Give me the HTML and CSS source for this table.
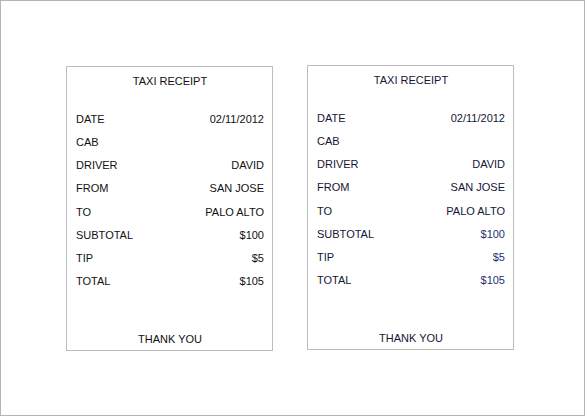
FILE: index.html
```html
<!DOCTYPE html>
<html>
<head>
  <title>Taxi Receipt</title>
  <link rel="stylesheet" href="styles.css">
</head>
<body>
  <div class="page">
    <div class="receipt receipt-left">
      <div class="title">TAXI RECEIPT</div>
      <div class="rows">
        <div class="row"><span>DATE</span><span>02/11/2012</span></div>
        <div class="row"><span>CAB</span><span></span></div>
        <div class="row"><span>DRIVER</span><span>DAVID</span></div>
        <div class="row"><span>FROM</span><span>SAN JOSE</span></div>
        <div class="row"><span>TO</span><span>PALO ALTO</span></div>
        <div class="row"><span>SUBTOTAL</span><span>$100</span></div>
        <div class="row"><span>TIP</span><span>$5</span></div>
        <div class="row"><span>TOTAL</span><span>$105</span></div>
      </div>
      <div class="thanks">THANK YOU</div>
    </div>

    <div class="receipt receipt-right">
      <div class="title">TAXI RECEIPT</div>
      <div class="rows">
        <div class="row"><span>DATE</span><span>02/11/2012</span></div>
        <div class="row"><span>CAB</span><span></span></div>
        <div class="row"><span>DRIVER</span><span>DAVID</span></div>
        <div class="row"><span>FROM</span><span>SAN JOSE</span></div>
        <div class="row"><span>TO</span><span>PALO ALTO</span></div>
        <div class="row"><span>SUBTOTAL</span><span class="amount">$100</span></div>
        <div class="row"><span>TIP</span><span class="amount">$5</span></div>
        <div class="row"><span>TOTAL</span><span class="amount">$105</span></div>
      </div>
      <div class="thanks">THANK YOU</div>
    </div>
  </div>
</body>
</html>
```

FILE: styles.css
```css
html,
body {
  margin: 0;
  padding: 0;
  background: #ffffff;
}

.page {
  box-sizing: border-box;
  width: 585px;
  height: 416px;
  border: 1px solid #b4b4b4;
  display: flex;
  flex-direction: row;
  align-items: flex-start;
  gap: 34px;
  padding: 64px 0 0 65px;
  font-family: "Liberation Sans", Arial, sans-serif;
  font-size: 11px;
  color: #111111;
}

.receipt {
  box-sizing: border-box;
  width: 207px;
  height: 285px;
  border: 1px solid #bdbdbd;
  display: flex;
  flex-direction: column;
  padding: 7px 8px 4px 9px;
}

.receipt-left {
  margin-top: 1px;
}

.title {
  text-align: center;
  line-height: 14px;
  margin-bottom: 20px;
}

.row {
  display: flex;
  justify-content: space-between;
  height: 23.15px;
  line-height: 23px;
}

.thanks {
  margin-top: auto;
  text-align: center;
  line-height: 14px;
}

.receipt-right {
  color: #141634;
}

.receipt-right .amount {
  color: #1b3275;
}
```
